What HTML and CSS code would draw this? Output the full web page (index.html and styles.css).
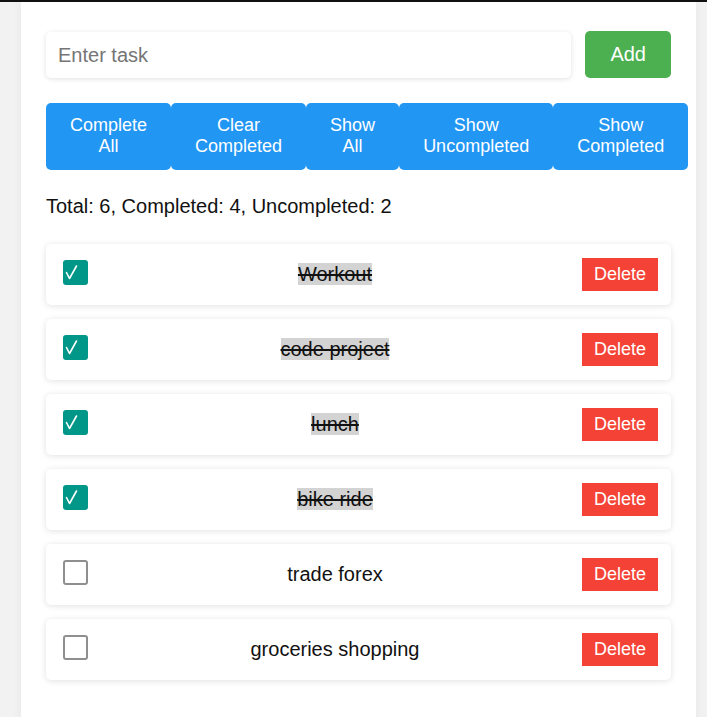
FILE: index.html
```html
<!DOCTYPE html>
<html lang="en">
<head>
<meta charset="utf-8">
<title>Todo</title>
<link rel="stylesheet" href="styles.css">
</head>
<body>
<div class="topline"></div>
<div class="container">
  <div class="add-row">
    <input class="task-input" type="text" placeholder="Enter task">
    <button class="add-btn">Add</button>
  </div>
  <div class="actions">
    <button class="action">Complete All</button>
    <button class="action">Clear Completed</button>
    <button class="action">Show All</button>
    <button class="action">Show Uncompleted</button>
    <button class="action">Show Completed</button>
  </div>
  <div class="stats">Total: 6, Completed: 4, Uncompleted: 2</div>
  <ul class="tasks">
    <li class="task"><span class="check checked"><svg class="tick" viewBox="0 0 25 25"><path d="M3.5 12.5 L6.5 18.5 L13.5 6"/></svg></span><span class="text"><span class="done">Workout</span></span><button class="delete">Delete</button></li>
    <li class="task"><span class="check checked"><svg class="tick" viewBox="0 0 25 25"><path d="M3.5 12.5 L6.5 18.5 L13.5 6"/></svg></span><span class="text"><span class="done">code project</span></span><button class="delete">Delete</button></li>
    <li class="task"><span class="check checked"><svg class="tick" viewBox="0 0 25 25"><path d="M3.5 12.5 L6.5 18.5 L13.5 6"/></svg></span><span class="text"><span class="done">lunch</span></span><button class="delete">Delete</button></li>
    <li class="task"><span class="check checked"><svg class="tick" viewBox="0 0 25 25"><path d="M3.5 12.5 L6.5 18.5 L13.5 6"/></svg></span><span class="text"><span class="done">bike ride</span></span><button class="delete">Delete</button></li>
    <li class="task"><span class="check"></span><span class="text">trade forex</span><button class="delete">Delete</button></li>
    <li class="task"><span class="check"></span><span class="text">groceries shopping</span><button class="delete">Delete</button></li>
  </ul>
</div>
</body>
</html>
```
FILE: styles.css
```css
html, body {
  margin: 0;
  padding: 0;
  background: #f2f2f2;
  font-family: "Liberation Sans", Arial, sans-serif;
  color: #111;
  overflow: hidden;
}
.topline {
  height: 2px;
  background: #111;
}
.container {
  margin-left: 21px;
  width: 625px;
  min-height: 760px;
  background: #fff;
  padding: 28px 25px 0 25px;
  box-shadow: 0 0 10px rgba(0, 0, 0, 0.06);
}
.add-row {
  display: flex;
  align-items: center;
  gap: 14px;
}
.task-input {
  flex: 1;
  min-width: 0;
  height: 46px;
  box-sizing: border-box;
  border: none;
  border-radius: 5px;
  padding: 0 12px;
  font-family: inherit;
  font-size: 20px;
  color: #333;
  box-shadow: 0 1px 5px rgba(0, 0, 0, 0.12);
  outline: none;
  margin-top: 2px;
}
.task-input::placeholder {
  color: #757575;
}
.add-btn {
  height: 47px;
  padding: 0 25px;
  border: none;
  border-radius: 5px;
  background: #4caf50;
  color: #fff;
  font-family: inherit;
  font-size: 20px;
}
.actions {
  display: flex;
  margin-top: 25px;
}
.action {
  flex: 0 0 auto;
  width: min-content;
  padding: 12px 24px 13px;
  border: none;
  border-radius: 5px;
  background: #2196f3;
  color: #fff;
  font-family: inherit;
  font-size: 18px;
  line-height: 21px;
}
.stats {
  margin-top: 25px;
  font-size: 20px;
  line-height: 23px;
}
.tasks {
  list-style: none;
  margin: 26px 0 0 0;
  padding: 0;
}
.task {
  display: flex;
  align-items: center;
  padding: 14px 13px 14px 17px;
  margin-bottom: 14px;
  border-radius: 5px;
  box-shadow: 0 1px 6px rgba(0, 0, 0, 0.12);
  background: #fff;
}
.check {
  width: 25px;
  height: 25px;
  box-sizing: border-box;
  border: 2px solid #8f8f8f;
  border-radius: 3px;
  margin-top: -4px;
  flex: 0 0 auto;
  display: block;
}
.check.checked {
  border: none;
  background: #009688;
}
.tick {
  display: block;
  width: 25px;
  height: 25px;
  fill: none;
  stroke: #fff;
  stroke-width: 1.6;
  stroke-linecap: round;
  stroke-linejoin: round;
}
.text {
  flex: 1;
  text-align: center;
  font-size: 20px;
  line-height: 23px;
}
.done {
  background: #d3d3d3;
  text-decoration: line-through;
}
.delete {
  height: 33px;
  padding: 0 12px;
  border: none;
  background: #f44336;
  color: #fff;
  font-family: inherit;
  font-size: 18px;
}
```
